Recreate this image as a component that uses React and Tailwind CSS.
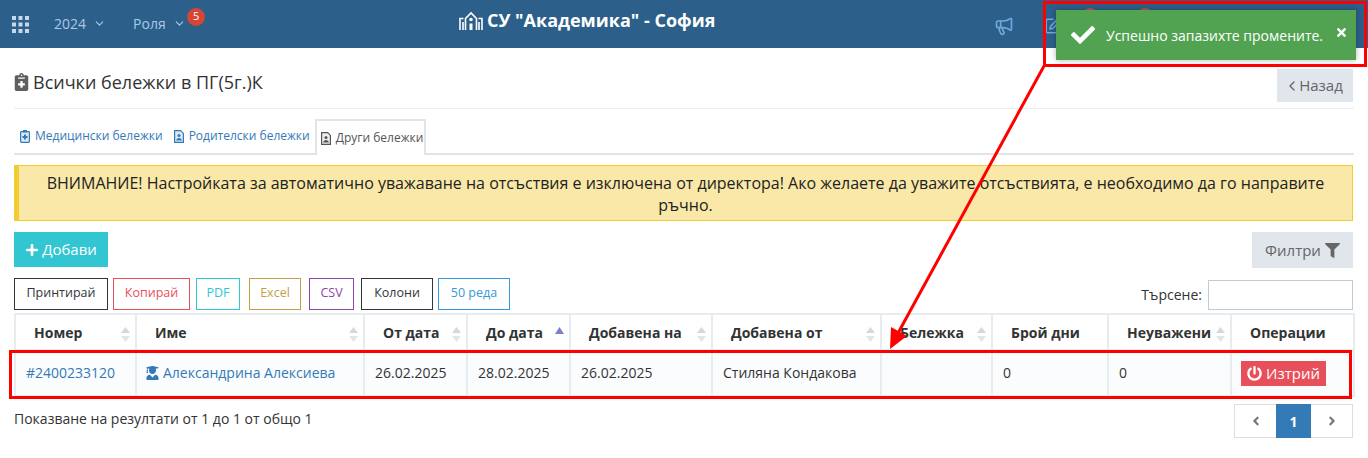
import React from 'react';
import { ChevronDown, ChevronLeft, Megaphone, SquarePen } from 'lucide-react';
import { FaAngleLeft, FaAngleRight, FaCheck, FaFilter, FaNotesMedical, FaPlus, FaPowerOff, FaTimes, FaUserGraduate } from 'react-icons/fa';

const exportButtons = [
  { label: 'Принтирай', cls: 'w-[94px] mr-[5px] border-[#2f353b] text-[#2f353b]' },
  { label: 'Копирай', cls: 'w-[77px] mr-[6px] border-[#e7505a] text-[#e7505a]' },
  { label: 'PDF', cls: 'w-[44px] mr-[9px] border-[#32c5d2] text-[#32c5d2]' },
  { label: 'Excel', cls: 'w-[52px] mr-[8px] border-[#c49f47] text-[#c49f47]' },
  { label: 'CSV', cls: 'w-[45px] mr-[7px] border-[#8e44ad] text-[#8e44ad]' },
  { label: 'Колони', cls: 'w-[72px] mr-[5px] border-[#2f353b] text-[#2f353b]' },
  { label: '50 реда', cls: 'w-[72px] border-[#3598dc] text-[#3598dc]' },
];

const columns = [
  { label: 'Номер', width: 121, sort: 'both' },
  { label: 'Име', width: 228, sort: 'both' },
  { label: 'От дата', width: 103, sort: 'both' },
  { label: 'До дата', width: 103, sort: 'asc' },
  { label: 'Добавена на', width: 142, sort: 'both' },
  { label: 'Добавена от', width: 169, sort: 'both' },
  { label: 'Бележка', width: 111, sort: 'both' },
  { label: 'Брой дни', width: 116, sort: null },
  { label: 'Неуважени', width: 123, sort: 'both' },
  { label: 'Операции', width: 123, sort: null },
];

const SortArrows = ({ sort }) => {
  if (!sort) return null;
  if (sort === 'asc') {
    return (
      <svg className="absolute right-[5px] top-[12px] w-[9px] h-[7px]" viewBox="0 0 9 7">
        <path d="M4.5 0L9 7H0z" fill="#7b7fd0" />
      </svg>
    );
  }
  return (
    <svg className="absolute right-[5px] top-[12px] w-[9px] h-[15px]" viewBox="0 0 9 15">
      <path d="M4.5 0L9 6H0z" fill="#d6d8da" />
      <path d="M4.5 15L0 9h9z" fill="#e2e4e6" />
    </svg>
  );
};

const SchoolIcon = () => (
  <svg className="w-[24px] h-[20px] mr-[4px]" viewBox="0 0 24 20" fill="none" stroke="white" strokeWidth="1.6">
    <path d="M6.5 19V7.5L12 2l5.5 5.5V19" />
    <path d="M1 19V7.5h3.5M23 19V7.5h-3.5" />
    <path d="M4 11v8M20 11v8" />
    <circle cx="12" cy="8.5" r="1.8" fill="white" stroke="none" />
    <path d="M10.5 19v-6.5h3V19" fill="white" stroke="none" />
  </svg>
);

const MedTabIcon = () => (
  <svg className="w-[10px] h-[13px] mr-[5px]" viewBox="0 0 10 13">
    <rect x="0.6" y="1.6" width="8.8" height="10.8" rx="0.8" fill="#dbe8f3" stroke="#337ab7" strokeWidth="1.2" />
    <rect x="3" y="0" width="4" height="2.5" fill="#337ab7" />
    <path d="M4 4.5h2V6h1.5v2H6v1.5H4V8H2.5V6H4z" fill="#337ab7" />
  </svg>
);

const PersonTabIcon = ({ color, fill }) => (
  <svg className="w-[10px] h-[13px] mr-[5px]" viewBox="0 0 10 13">
    <path d="M0.6 0.6h6l2.8 2.8v9H0.6z" fill={fill} stroke={color} strokeWidth="1.2" />
    <circle cx="5" cy="5.5" r="1.5" fill={color} />
    <path d="M2.2 10.6c0-3.4 5.6-3.4 5.6 0z" fill={color} />
  </svg>
);

const cellBorder = 'border-2 border-[#e7ecf1]';

const App = () => {
  return (
    <div className="relative w-[1368px] h-[458px] overflow-hidden bg-white text-[#333] font-['Open_Sans',sans-serif]">
      <header className="h-12 bg-[#2c5f8a] flex items-center relative">
        <svg className="ml-[12px] w-[17px] h-[17px]" viewBox="0 0 17 17" fill="#c6d9ea">
          <rect x="0" y="0" width="4" height="4" /><rect x="6.5" y="0" width="4" height="4" /><rect x="13" y="0" width="4" height="4" />
          <rect x="0" y="6.5" width="4" height="4" /><rect x="6.5" y="6.5" width="4" height="4" /><rect x="13" y="6.5" width="4" height="4" />
          <rect x="0" y="13" width="4" height="4" /><rect x="6.5" y="13" width="4" height="4" /><rect x="13" y="13" width="4" height="4" />
        </svg>
        <div className="ml-[25px] -mt-[2px] flex items-center text-[14px] text-[#a9c9e6]">
          2024
          <ChevronDown className="ml-[7px] w-[13px] h-[13px]" strokeWidth={2} />
        </div>
        <div className="relative ml-[27px] -mt-[2px] flex items-center text-[14px] text-[#a9c9e6]">
          Роля
          <ChevronDown className="ml-[7px] w-[13px] h-[13px]" strokeWidth={2} />
          <span className="absolute left-[54px] top-[-5px] w-[18px] h-[18px] rounded-full bg-[#d64635] text-white text-[11px] flex items-center justify-center">5</span>
        </div>
        <div className="absolute left-[459px] top-[8px] flex items-center text-white font-bold text-[18px] leading-[25px]">
          <SchoolIcon />
          СУ "Академика" - София
        </div>
        <Megaphone className="absolute left-[994px] top-[16px] w-[20px] h-[20px] text-[#6fa8dc]" strokeWidth={2} />
        <SquarePen className="absolute left-[1044px] top-[17px] w-[18px] h-[18px] text-[#6fa8dc]" strokeWidth={2} />
        <span className="absolute left-[1081px] top-[8px] w-[18px] h-[18px] rounded-full bg-[#c0574a]" />
        <span className="absolute left-[1136px] top-[8px] w-[18px] h-[18px] rounded-full bg-[#c0574a]" />
      </header>

      <main className="px-[14px]">
        <div className="h-[61px] border-b border-[#eee] flex items-start justify-between">
          <div className="flex items-center mt-[21px] text-[18px] leading-[26px] text-[#333]">
            <FaNotesMedical className="w-[15px] h-[18px] mr-[4px] text-[#5f5f5f]" />
            Всички бележки в ПГ(5г.)К
          </div>
          <button className="mt-[21px] mr-[1px] pr-[3px] w-[76px] h-[33px] bg-[#e1e5ec] text-[#666] text-[15px] flex items-center justify-center">
            <ChevronLeft className="w-[16px] h-[16px] -mr-[1px]" strokeWidth={2} />
            Назад
          </button>
        </div>

        <div className="mt-[10px] h-[36px] border-b-2 border-[#e4e4e4] flex items-stretch text-[12px]">
          <div className="flex items-center pl-[6px] pr-[6px] text-[#337ab7]">
            <MedTabIcon />
            Медицински бележки
          </div>
          <div className="flex items-center pl-[5px] pr-[5px] text-[#337ab7]">
            <PersonTabIcon color="#337ab7" fill="#dbe8f3" />
            Родителски бележки
          </div>
          <div className="flex items-center pl-[4px] pr-0 w-[111px] h-[36px] bg-white border-2 border-b-0 border-[#e4e4e4] text-[#555] -mb-[2px]">
            <PersonTabIcon color="#555" fill="#eee" />
            Други бележки
          </div>
        </div>

        <div className="mt-[10px] mr-[1px] h-[56px] bg-[#f9e8a8] border border-l-[5px] border-[#f3cc31] text-[#222] text-[16px] leading-[22px] text-center px-[16px] pt-[6px]">
          ВНИМАНИЕ! Настройката за автоматично уважаване на отсъствия е изключена от директора! Ако желаете да уважите отсъствията, е необходимо да го направите ръчно.
        </div>

        <div className="mt-[11px] mr-[1px] flex items-start justify-between">
          <button className="w-[94px] h-[35px] bg-[#32c5d2] text-white text-[15px] flex items-center justify-center">
            <FaPlus className="w-[14px] h-[14px] mr-[3px]" />
            Добави
          </button>
          <button className="w-[101px] h-[36px] bg-[#e1e5ec] text-[#666] text-[15px] flex items-center justify-center">
            Филтри
            <FaFilter className="w-[15px] h-[15px] ml-[4px]" />
          </button>
        </div>

        <div className="mt-[9px] mr-[1px] flex items-center justify-between h-[33px]">
          <div className="flex items-center">
            {exportButtons.map((b, i) => (
              <button key={i} className={`h-[32px] border text-[12.5px] flex items-center justify-center ${b.cls}`}>{b.label}</button>
            ))}
          </div>
          <label className="flex items-center text-[14px] text-[#333] mt-[2px]">
            Търсене:
            <span className="ml-[6px] w-[145px] h-[30px] border border-[#c2cad8] bg-white block" />
          </label>
        </div>

        <table className="mt-[3px] table-fixed border-collapse w-[1339px] text-[14px]">
          <colgroup>
            {columns.map((c, i) => <col key={i} style={{ width: c.width }} />)}
          </colgroup>
          <thead>
            <tr className="h-[36px]">
              {columns.map((c, i) => (
                <th key={i} className={`relative text-left font-bold text-[14px] text-[#333] pl-[18px] ${cellBorder}`}>
                  {c.label}
                  <SortArrows sort={c.sort} />
                </th>
              ))}
            </tr>
          </thead>
          <tbody>
            <tr className="h-[46px] bg-[#fbfcfd]">
              <td className={`pl-[10px] pb-[1px] text-[#337ab7] ${cellBorder}`}>#2400233120</td>
              <td className={`pl-[9px] pb-[1px] text-[#337ab7] ${cellBorder}`}>
                <span className="flex items-center">
                  <FaUserGraduate className="w-[13px] h-[14px] mr-[4px]" />
                  Александрина Алексиева
                </span>
              </td>
              <td className={`pl-[10px] pb-[1px] ${cellBorder}`}>26.02.2025</td>
              <td className={`pl-[10px] pb-[1px] ${cellBorder}`}>28.02.2025</td>
              <td className={`pl-[10px] pb-[1px] ${cellBorder}`}>26.02.2025</td>
              <td className={`pl-[10px] pb-[1px] ${cellBorder}`}>Стиляна Кондакова</td>
              <td className={cellBorder}></td>
              <td className={`pl-[10px] pb-[1px] ${cellBorder}`}>0</td>
              <td className={`pl-[10px] pb-[1px] ${cellBorder}`}>0</td>
              <td className={`pl-[9px] ${cellBorder}`}>
                <button className="w-[85px] h-[25px] bg-[#e7505a] text-white text-[15px] flex items-center justify-center">
                  <FaPowerOff className="w-[15px] h-[15px] mr-[4px]" />
                  Изтрий
                </button>
              </td>
            </tr>
          </tbody>
        </table>

        <div className="mt-[7px] mr-[1px] flex items-start justify-between">
          <div className="mt-[4px] text-[14px] text-[#333]">Показване на резултати от 1 до 1 от общо 1</div>
          <div className="flex h-[34px] w-[119px] border border-[#ddd]">
            <span className="flex-1 flex items-center justify-center text-[#777]"><FaAngleLeft className="w-[14px] h-[14px]" /></span>
            <span className="w-[35px] -my-px bg-[#337ab7] text-white font-bold text-[14px] flex items-center justify-center">1</span>
            <span className="flex-1 flex items-center justify-center text-[#777]"><FaAngleRight className="w-[14px] h-[14px]" /></span>
          </div>
        </div>
      </main>

      <div className="absolute left-[1056px] top-[10px] w-[300px] h-[50px] bg-[#51a351] text-white text-[14px] flex items-center shadow-[0_0_6px_rgba(0,0,0,0.3)]">
        <FaCheck className="ml-[15px] w-[24px] h-[24px]" />
        <span className="ml-[11px]">Успешно запазихте промените.</span>
        <FaTimes className="absolute right-[8px] top-[16px] w-[13px] h-[13px]" />
      </div>

      <svg className="absolute inset-0 w-[1368px] h-[458px] pointer-events-none" viewBox="0 0 1368 458" fill="none">
        <rect x="1044.5" y="2.5" width="321" height="63" stroke="#f00" strokeWidth="3" />
        <rect x="10.5" y="351.5" width="1340" height="46" stroke="#f00" strokeWidth="3" />
        <line x1="1044" y1="66" x2="897" y2="335" stroke="#f00" strokeWidth="3" />
        <path d="M890 349L891 327L907 336z" fill="#f00" />
      </svg>
    </div>
  );
};

export default App;
